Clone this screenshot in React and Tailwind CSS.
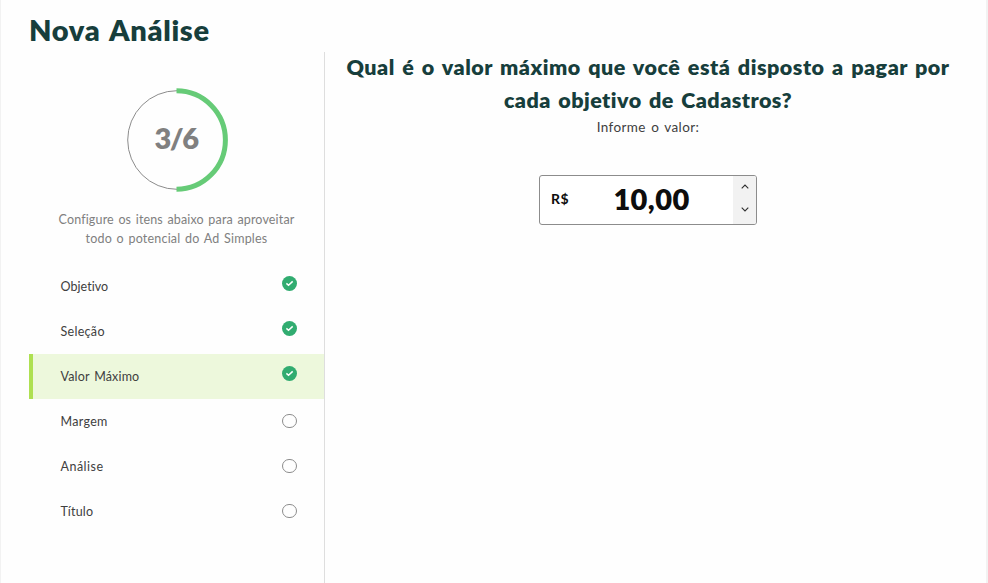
import { useState } from 'react';
import { clsx } from 'clsx';

const STEPS = [
  { label: 'Objetivo', spacing: 'tracking-[0.05px]' },
  { label: 'Seleção', spacing: 'tracking-[0.3px]' },
  { label: 'Valor Máximo', spacing: 'tracking-[0.15px] [word-spacing:1.5px]' },
  { label: 'Margem', spacing: 'tracking-[0.3px]' },
  { label: 'Análise', spacing: 'tracking-[0.5px]' },
  { label: 'Título', spacing: 'tracking-[0.25px]' },
];

function ProgressRing({ current, total }) {
  return (
    <div className="relative flex h-[104px] w-[102px] items-center justify-center">
      <svg className="absolute inset-0" width="102" height="104" viewBox="0 0 102 104" fill="none">
        <circle cx="50" cy="52" r="49.3" stroke="#8c8c8c" strokeWidth="1" />
        <path d="M49.5 2.7A48.9 49.3 0 0 1 49.5 101.3" stroke="#66cb77" strokeWidth="5" />
      </svg>
      <span className="relative pr-[4px] pb-[5px] text-[29px] leading-none font-extrabold tracking-[-1.5px] text-[#808080]">
        {current}/{total}
      </span>
    </div>
  );
}

function StepStatus({ done }) {
  if (!done) {
    return (
      <svg className="-mt-px" width="15" height="14" viewBox="0 0 15 14" fill="none">
        <rect x="0.5" y="0.5" width="14" height="13" rx="6.5" stroke="#8c8c8c" />
      </svg>
    );
  }

  return (
    <svg className="-mt-[7px]" width="15" height="15" viewBox="0 0 15 15" fill="none">
      <circle cx="7.5" cy="7.5" r="7.5" fill="#31ac70" />
      <path d="M4.4 7.4 6.5 9.2 10.7 5.4" stroke="white" strokeWidth="1.5" />
    </svg>
  );
}

function Sidebar({ active, completed }) {
  return (
    <aside className="flex w-[296px] shrink-0 flex-col border-r border-[#dedede] pt-9">
      <div className="ml-[98px]">
        <ProgressRing current={completed} total={STEPS.length} />
      </div>

      <p className="mt-[18px] text-center text-[12.5px] leading-[19px] text-[#808080]">
        <span className="block tracking-[0.15px] [word-spacing:1.2px]">Configure os itens abaixo para aproveitar</span>
        <span className="block tracking-[0.2px] [word-spacing:1.2px]">todo o potencial do Ad Simples</span>
      </p>

      <ul className="mt-4">
        {STEPS.map((step, index) => (
          <li
            key={step.label}
            className={clsx(
              'flex h-[45px] items-center justify-between border-l-4 pr-[27px] pl-[27.5px] text-[12.5px] text-[#404040]',
              index === active ? 'border-[#aee051] bg-[#edf8dc]' : 'border-transparent'
            )}
          >
            <span className={clsx('pt-px', step.spacing)}>{step.label}</span>
            <StepStatus done={index < completed} />
          </li>
        ))}
      </ul>
    </aside>
  );
}

function PriceInput() {
  const [value, setValue] = useState(10);

  return (
    <div className="flex h-[50px] w-[218px] overflow-hidden rounded-[3px] border border-[#8c8c8c] bg-white text-[#0d0d0d]">
      <span className="flex w-[50px] items-center pb-[3px] pl-[11px] text-[14px] font-bold tracking-[0.5px]">R$</span>
      <span className="flex flex-1 items-center justify-center pr-5 pb-[4px] text-[29px] leading-none font-extrabold tracking-[0.4px]">
        {value.toFixed(2).replace('.', ',')}
      </span>
      <div className="flex w-[23px] flex-col bg-[#f2f2f2] text-[#303030]">
        <button
          aria-label="Aumentar"
          className="flex flex-1 items-start justify-center pt-[8px]"
          onClick={() => setValue(value + 1)}
        >
          <svg width="8" height="5" viewBox="0 0 8 5" fill="none" stroke="currentColor" strokeWidth="1.1">
            <path d="M.7 4.3 4 1 7.3 4.3" />
          </svg>
        </button>
        <button
          aria-label="Diminuir"
          className="flex flex-1 items-start justify-center pt-[6px]"
          onClick={() => setValue(Math.max(0, value - 1))}
        >
          <svg width="8" height="5" viewBox="0 0 8 5" fill="none" stroke="currentColor" strokeWidth="1.1">
            <path d="M.7 .7 4 4 7.3 .7" />
          </svg>
        </button>
      </div>
    </div>
  );
}

export default function App() {
  return (
    <div className="flex h-[583px] w-[988px] flex-col overflow-hidden border-r-2 border-l border-[#f2f2f2] bg-[#fefefe] pl-7 font-['Lato',sans-serif]">
      <h1 className="h-[52px] pt-[9px] text-[29px] leading-[42px] font-extrabold tracking-[0.7px] text-[#173e3c] [word-spacing:2px]">
        Nova Análise
      </h1>

      <div className="flex flex-1">
        <Sidebar active={2} completed={3} />

        {/* Question */}
        <main className="flex flex-1 flex-col items-center pr-[15px]">
          <h2 className="-mt-px text-center text-[21.5px] leading-[33px] font-extrabold text-[#173e3c] [word-spacing:2px]">
            <span className="block tracking-[0.5px]">Qual é o valor máximo que você está disposto a pagar por</span>
            <span className="block tracking-[0.45px]">cada objetivo de Cadastros?</span>
          </h2>
          <p className="mb-[37px] text-[13.5px] leading-[21px] tracking-[0.4px] text-[#404040] [word-spacing:1.5px]">
            Informe o valor:
          </p>
          <PriceInput />
        </main>
      </div>
    </div>
  );
}
